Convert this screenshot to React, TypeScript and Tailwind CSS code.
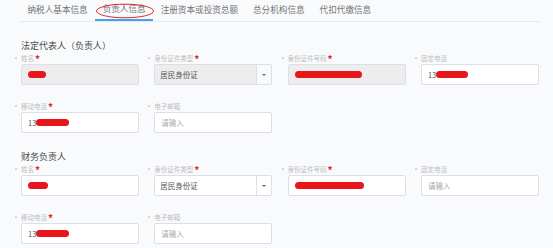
import React from 'react';

type Field = {
  label: string;
  required?: boolean;
  kind: 'text' | 'select';
  disabled?: boolean;
  value?: string;
  scribble?: number; // width of redaction
  prefix?: string;
};

const tabs = ['纳税人基本信息', '负责人信息', '注册资本或投资总额', '总分机构信息', '代扣代缴信息'];

const sections: { title: string; rows: Field[][] }[] = [
  {
    title: '法定代表人（负责人）',
    rows: [
      [
        { label: '姓名', required: true, kind: 'text', disabled: true, scribble: 18 },
        { label: '身份证件类型', required: true, kind: 'select', disabled: true, value: '居民身份证' },
        { label: '身份证件号码', required: true, kind: 'text', disabled: true, scribble: 67 },
        { label: '固定电话', kind: 'text', prefix: '13', scribble: 32 },
      ],
      [
        { label: '移动电话', required: true, kind: 'text', prefix: '13', scribble: 33 },
        { label: '电子邮箱', kind: 'text' },
      ],
    ],
  },
  {
    title: '财务负责人',
    rows: [
      [
        { label: '姓名', required: true, kind: 'text', scribble: 20 },
        { label: '身份证件类型', required: true, kind: 'select', value: '居民身份证' },
        { label: '身份证件号码', required: true, kind: 'text', scribble: 69 },
        { label: '固定电话', kind: 'text' },
      ],
      [
        { label: '移动电话', required: true, kind: 'text', prefix: '13', scribble: 33 },
        { label: '电子邮箱', kind: 'text' },
      ],
    ],
  },
];

const FormField: React.FC<{ f: Field }> = ({ f }) => {
  const bg = f.disabled ? 'bg-[#ededed]' : 'bg-white';
  return (
    <div className="flex flex-col">
      <div className="flex items-center h-[8px] mb-[2px] -ml-[6px] text-[6.5px] leading-[8px] text-[#bcbcbc]">
        <span className="w-[2px] h-[2px] rounded-full bg-[#c8c8c8] mr-[4px]"></span>
        <span>{f.label}</span>
        {f.required && <span className="text-[#e41f24] text-[10px] leading-[8px] font-bold ml-[1px] mt-[2px]">*</span>}
      </div>
      {f.kind === 'select' ? (
        <div className="flex h-[21px] border border-[#dcdfe6] rounded-[2px] overflow-hidden">
          <div className={`flex-1 flex items-center pl-[5px] text-[7.5px] text-[#555] ${bg}`}>{f.value}</div>
          <div className={`w-[15px] flex items-center justify-center border-l border-[#dcdfe6] ${f.disabled ? 'bg-[#f9fafb]' : 'bg-white'}`}>
            <span className="w-0 h-0 border-l-[2px] border-r-[2px] border-t-[2.5px] border-l-transparent border-r-transparent border-t-[#666]"></span>
          </div>
        </div>
      ) : (
        <div className={`flex items-center h-[21px] pl-[6px] border border-[#dcdfe6] rounded-[2px] text-[7.5px] ${bg}`}>
          {f.prefix && <span className="text-[#555]">{f.prefix}</span>}
          {f.scribble ? (
            <span
              className="h-[7px] rounded-full bg-[#e8161a] blur-[0.4px]"
              style={{ width: f.scribble }}
            ></span>
          ) : (
            !f.prefix && <span className="text-[#a8a8a8]">请输入</span>
          )}
        </div>
      )}
    </div>
  );
};

export default function App() {
  return (
    <div
      className="w-[553px] h-[248px] overflow-hidden bg-[#f9fafc]"
      style={{ fontFamily: '"Noto Sans CJK SC", "Noto Sans", sans-serif' }}
    >
      <div className="mx-[20px] w-[520px] flex h-[22px] border-b border-[#e6e8ec]">
        {tabs.map((t, i) => (
          <div
            key={t}
            className={`relative px-[7.5px] h-[21px] flex items-center text-[8.6px] text-[#757575] ${i === 1 ? 'border-b-2 border-[#4a9ff5]' : ''}`}
          >
            <span className="-mt-[2px]">{t}</span>
            {i === 1 && (
              <svg className="absolute left-[0px] top-[3px]" width="60" height="16" viewBox="0 0 60 16">
                <ellipse cx="30" cy="8" rx="28.5" ry="6.8" fill="none" stroke="#e0262a" strokeWidth="1" />
              </svg>
            )}
          </div>
        ))}
      </div>

      {sections.map((s) => (
        <div key={s.title} className="mt-[18px]">
          <div className="ml-[21px] h-[12px] leading-[12px] text-[9px] text-[#4a4a4a] mb-[2px]">{s.title}</div>
          <div className="ml-[21px] grid grid-cols-[repeat(4,118px)] gap-x-[15.3px] gap-y-[17px]">
            {s.rows.map((row, ri) =>
              row.map((f, fi) => (
                <div key={`${ri}-${fi}`} className={fi === 0 ? 'col-start-1' : ''}>
                  <FormField f={f} />
                </div>
              ))
            )}
          </div>
        </div>
      ))}
    </div>
  );
}
